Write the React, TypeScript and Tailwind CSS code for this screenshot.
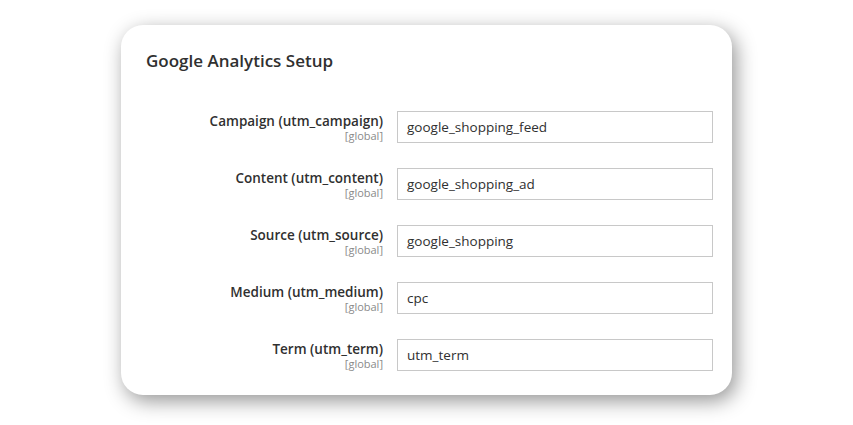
const fields = [
  { label: "Campaign (utm_campaign)", value: "google_shopping_feed" },
  { label: "Content (utm_content)", value: "google_shopping_ad" },
  { label: "Source (utm_source)", value: "google_shopping" },
  { label: "Medium (utm_medium)", value: "cpc" },
  { label: "Term (utm_term)", value: "utm_term" },
];

export default function App() {
  return (
    <div className="h-[425px] w-[853px] bg-white pl-[121px] pt-[25px] font-['Open_Sans',sans-serif] text-[#303030]">
      <div className="h-[370px] w-[611px] rounded-[22px] bg-white pl-[25px] pt-[24px] shadow-[4px_6px_20px_rgba(0,0,0,0.42)]">
        <h2 className="text-[17px] font-semibold leading-[24px] text-[#303030]">
          Google Analytics Setup
        </h2>
        <div className="mt-[38px] flex flex-col gap-[25px]">
          {fields.map((f) => (
            <div key={f.label} className="flex items-start">
              <div className="flex w-[237px] flex-col items-end pt-[2px]">
                <span className="text-[13.5px] font-semibold leading-[16px] text-[#303030]">
                  {f.label}
                </span>
                <span className="text-[11px] leading-[13px] text-[#8a8a8a]">[global]</span>
              </div>
              <div className="ml-[14px] flex h-[32px] w-[316px] items-center border border-[#c8c8c8] px-[9px] text-[13.5px] text-[#303030]">
                {f.value}
              </div>
            </div>
          ))}
        </div>
      </div>
    </div>
  );
}
